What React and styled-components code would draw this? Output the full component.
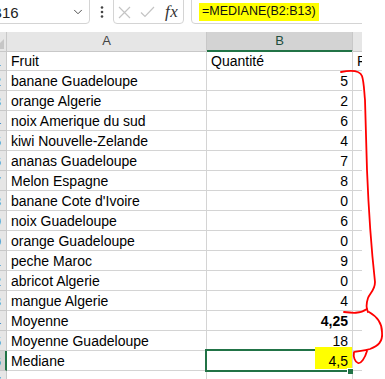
import React from "react";
import styled, { createGlobalStyle } from "styled-components";
import { ChevronDown } from "lucide-react";

const GlobalStyle = createGlobalStyle`
  html, body {
    margin: 0;
    padding: 0;
    background: #fff;
  }
  body {
    font-family: "Liberation Sans", Arial, sans-serif;
  }
`;

const Page = styled.div`
  position: relative;
  width: 385px;
  height: 379px;
  overflow: hidden;
  background: #fff;
`;

const Window = styled.div`
  width: 362px;
  height: 379px;
  overflow: hidden;
`;

const FormulaBar = styled.div`
  display: flex;
  align-items: stretch;
  height: 28px;
  margin-top: -4px;
`;

const NameBox = styled.div`
  flex: 0 0 auto;
  box-sizing: border-box;
  width: 110px;
  margin-left: -20px;
  border: 1px solid #d4d4d4;
  border-radius: 4px;
  display: flex;
  align-items: center;
  padding: 4px 4px 0 11px;
  font-size: 15px;
  color: #222;

  svg {
    margin-left: auto;
    color: #444;
  }
`;

const Dots = styled.div`
  flex: 0 0 23px;
  display: flex;
  align-items: center;
  justify-content: center;
  padding-top: 4px;
`;

const EditBox = styled.div`
  flex: 0 0 auto;
  box-sizing: border-box;
  width: 71px;
  border: 1px solid #d4d4d4;
  border-radius: 4px;
  display: flex;
  align-items: center;
  padding: 4px 0 0 4px;
  gap: 9px;
`;

const Fx = styled.span`
  font-family: "Liberation Serif", "Times New Roman", serif;
  font-style: italic;
  font-size: 17px;
  color: #333;
  margin-left: 1px;
  letter-spacing: 0.5px;
`;

const FormulaInput = styled.div`
  flex: 0 0 auto;
  box-sizing: border-box;
  width: 220px;
  margin-left: 7px;
  border: 1px solid #d4d4d4;
  border-radius: 4px;
  display: flex;
  align-items: center;
  padding: 4px 0 0 7px;
`;

const Marked = styled.span`
  background: #ffff00;
  padding: 2px 3px 3px 3px;
  font-size: 12.5px;
  line-height: 13px;
  color: #111;
`;

const Sheet = styled.div`
  display: flex;
  flex-direction: column;
  margin-top: 8px;
  margin-left: -23px;
`;

const Row = styled.div`
  display: grid;
  grid-template-columns: 30px 200px 146px 60px;
  height: ${(p) => (p.$head ? 19 : 20)}px;
`;

const ColHead = styled.div`
  box-sizing: border-box;
  border-right: 1px solid #c8c8c8;
  border-bottom: ${(p) => (p.$selected ? "2px solid #217346" : "1px solid #c8c8c8")};
  background: ${(p) => (p.$selected ? "#d3d3d3" : "#e6e6e6")};
  color: ${(p) => (p.$selected ? "#1f4e3d" : "#444")};
  font-size: 13px;
  line-height: 18px;
  text-align: center;
`;

const Corner = styled(ColHead)`
  position: relative;

  &::after {
    content: "";
    position: absolute;
    right: 2px;
    bottom: 2px;
    border-style: solid;
    border-width: 0 0 10px 10px;
    border-color: transparent transparent #c6c6c6 transparent;
  }
`;

const RowHead = styled.div`
  box-sizing: border-box;
  border-right: ${(p) => (p.$selected ? "2px solid #217346" : "1px solid #c8c8c8")};
  border-bottom: 1px solid #c8c8c8;
  background: ${(p) => (p.$selected ? "#d3d3d3" : "#e6e6e6")};
  color: ${(p) => (p.$selected ? "#1f6e43" : "#3c5a80")};
  font-size: 13px;
  line-height: 17px;
  padding: 2px ${(p) => (p.$selected ? 4 : 5)}px 0 0;
  text-align: right;
  overflow: hidden;
`;

const Cell = styled.div`
  position: relative;
  box-sizing: border-box;
  border-right: 1px solid #d4d4d4;
  border-bottom: 1px solid #d4d4d4;
  padding: 2px 4px 0 4px;
  font-size: 14px;
  line-height: 17px;
  color: #000;
  white-space: nowrap;
  text-align: ${(p) => (p.$num ? "right" : "left")};
  font-weight: ${(p) => (p.$bold ? 700 : 400)};
`;

const ActiveCell = styled(Cell)`
  &::after {
    content: "";
    position: absolute;
    top: -2px;
    left: -2px;
    right: 0;
    bottom: -2px;
    border: 2px solid #217346;
    z-index: 1;
  }
`;

const Handle = styled.span`
  position: absolute;
  right: -1px;
  bottom: -4px;
  width: 5px;
  height: 5px;
  background: #217346;
  border-left: 1px solid #fff;
  border-top: 1px solid #fff;
  z-index: 3;
`;

const Glow = styled.span`
  position: absolute;
  top: -4px;
  right: 0;
  width: 37px;
  height: 22px;
  background: #ffff00;
  z-index: 2;
`;

const Value = styled.span`
  position: relative;
  z-index: 3;
`;

const Ink = styled.svg`
  position: absolute;
  left: 0;
  top: 0;
  pointer-events: none;
`;

const rows = [
  ["banane Guadeloupe", "5"],
  ["orange Algerie", "2"],
  ["noix Amerique du sud", "6"],
  ["kiwi Nouvelle-Zelande", "4"],
  ["ananas Guadeloupe", "7"],
  ["Melon Espagne", "8"],
  ["banane Cote d'Ivoire", "0"],
  ["noix Guadeloupe", "6"],
  ["orange Guadeloupe", "0"],
  ["peche Maroc", "9"],
  ["abricot Algerie", "0"],
  ["mangue Algerie", "4"],
  ["Moyenne", "4,25", true],
  ["Moyenne Guadeloupe", "18"],
];

export default function App() {
  return (
    <Page>
      <GlobalStyle />
      <Window>
        <FormulaBar>
          <NameBox>
            B16
            <ChevronDown size={14} strokeWidth={1.6} />
          </NameBox>
          <Dots>
            <svg width="4" height="12" viewBox="0 0 4 12">
              <circle cx="2" cy="1.5" r="1.3" fill="#444" />
              <circle cx="2" cy="6" r="1.3" fill="#444" />
              <circle cx="2" cy="10.5" r="1.3" fill="#444" />
            </svg>
          </Dots>
          <EditBox>
            <svg width="13" height="13" viewBox="0 0 13 13">
              <path d="M1 1L12 12M12 1L1 12" stroke="#c4c4c4" strokeWidth="1.2" fill="none" />
            </svg>
            <svg width="15" height="12" viewBox="0 0 15 12">
              <path d="M1 6.5L5 10.5L14 1" stroke="#c4c4c4" strokeWidth="1.2" fill="none" />
            </svg>
            <Fx>fx</Fx>
          </EditBox>
          <FormulaInput>
            <Marked>=MEDIANE(B2:B13)</Marked>
          </FormulaInput>
        </FormulaBar>

        <Sheet>
          <Row $head>
            <Corner />
            <ColHead>A</ColHead>
            <ColHead $selected>B</ColHead>
            <ColHead />
          </Row>
          <Row>
            <RowHead>1</RowHead>
            <Cell>Fruit</Cell>
            <Cell>Quantité</Cell>
            <Cell>Prix</Cell>
          </Row>
          {rows.map(([name, qty, bold], i) => (
            <Row key={name}>
              <RowHead>{i + 2}</RowHead>
              <Cell>{name}</Cell>
              <Cell $num $bold={bold}>
                {qty}
              </Cell>
              <Cell />
            </Row>
          ))}
          <Row>
            <RowHead $selected>16</RowHead>
            <Cell>Mediane</Cell>
            <ActiveCell $num>
              <Glow />
              <Value>4,5</Value>
              <Handle />
            </ActiveCell>
            <Cell />
          </Row>
          <Row>
            <RowHead>17</RowHead>
            <Cell />
            <Cell />
            <Cell />
          </Row>
        </Sheet>
      </Window>

      <Ink width="385" height="379" viewBox="0 0 385 379">
        <g fill="none" stroke="#ff0000" strokeWidth="1.8" strokeLinecap="round" strokeLinejoin="round">
          <path d="M341 72 C352 70 360 71 362 76 C364 82 364 90 365 100 L367 170 C369 220 372 255 375 282 C375 290 370 293 368 298 C366 304 366 308 368 312" />
          <path d="M344 312 C352 313 360 314 367 309" />
          <path d="M369 312 C376 316 382 322 382 332 C383 342 378 346 370 349 C364 351 358 351 354 352 C353 357 355 362 358 363 C361 364 365 358 367 351" />
        </g>
      </Ink>
    </Page>
  );
}
